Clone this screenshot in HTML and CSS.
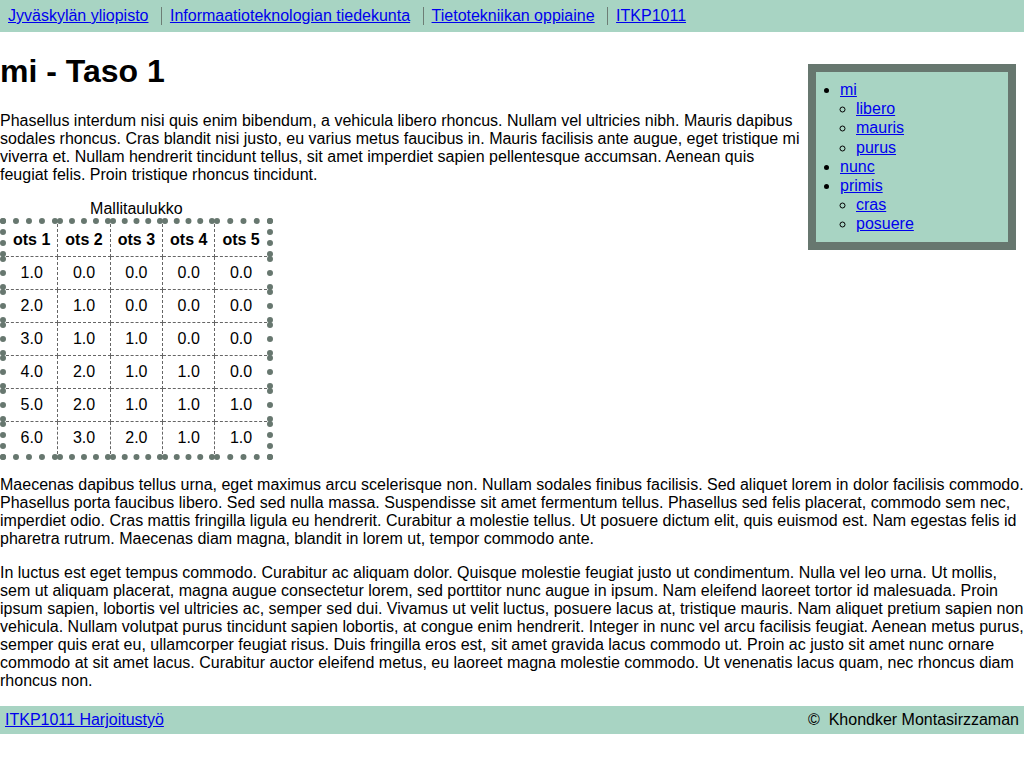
FILE: index.html
```html
<!DOCTYPE html>
<html lang="fi">
<head>
<meta charset="utf-8">
<title>mi - Taso 1</title>
<link rel="stylesheet" href="styles.css">
</head>
<body>
<header class="topbar">
  <ul class="crumbs">
    <li><a href="#">Jyväskylän yliopisto</a></li>
    <li><a href="#">Informaatioteknologian tiedekunta</a></li>
    <li><a href="#">Tietotekniikan oppiaine</a></li>
    <li><a href="#">ITKP1011</a></li>
  </ul>
</header>
<main class="content">
  <aside class="sidenav">
    <ul class="menu">
      <li><a href="#">mi</a>
        <ul class="submenu">
          <li><a href="#">libero</a></li>
          <li><a href="#">mauris</a></li>
          <li><a href="#">purus</a></li>
        </ul>
      </li>
      <li><a href="#">nunc</a></li>
      <li><a href="#">primis</a>
        <ul class="submenu">
          <li><a href="#">cras</a></li>
          <li><a href="#">posuere</a></li>
        </ul>
      </li>
    </ul>
  </aside>
  <h1 class="title">mi - Taso 1</h1>
  <p>Phasellus interdum nisi quis enim bibendum, a vehicula libero rhoncus. Nullam vel ultricies nibh. Mauris dapibus sodales rhoncus. Cras blandit nisi justo, eu varius metus faucibus in. Mauris facilisis ante augue, eget tristique mi viverra et. Nullam hendrerit tincidunt tellus, sit amet imperdiet sapien pellentesque accumsan. Aenean quis feugiat felis. Proin tristique rhoncus tincidunt.</p>
  <table class="sample">
    <caption>Mallitaulukko</caption>
    <thead>
      <tr><th>ots 1</th><th>ots 2</th><th>ots 3</th><th>ots 4</th><th>ots 5</th></tr>
    </thead>
    <tbody>
      <tr><td>1.0</td><td>0.0</td><td>0.0</td><td>0.0</td><td>0.0</td></tr>
      <tr><td>2.0</td><td>1.0</td><td>0.0</td><td>0.0</td><td>0.0</td></tr>
      <tr><td>3.0</td><td>1.0</td><td>1.0</td><td>0.0</td><td>0.0</td></tr>
      <tr><td>4.0</td><td>2.0</td><td>1.0</td><td>1.0</td><td>0.0</td></tr>
      <tr><td>5.0</td><td>2.0</td><td>1.0</td><td>1.0</td><td>1.0</td></tr>
      <tr><td>6.0</td><td>3.0</td><td>2.0</td><td>1.0</td><td>1.0</td></tr>
    </tbody>
  </table>
  <p>Maecenas dapibus tellus urna, eget maximus arcu scelerisque non. Nullam sodales finibus facilisis. Sed aliquet lorem in dolor facilisis commodo. Phasellus porta faucibus libero. Sed sed nulla massa. Suspendisse sit amet fermentum tellus. Phasellus sed felis placerat, commodo sem nec, imperdiet odio. Cras mattis fringilla ligula eu hendrerit. Curabitur a molestie tellus. Ut posuere dictum elit, quis euismod est. Nam egestas felis id pharetra rutrum. Maecenas diam magna, blandit in lorem ut, tempor commodo ante.</p>
  <p>In luctus est eget tempus commodo. Curabitur ac aliquam dolor. Quisque molestie feugiat justo ut condimentum. Nulla vel leo urna. Ut mollis, sem ut aliquam placerat, magna augue consectetur lorem, sed porttitor nunc augue in ipsum. Nam eleifend laoreet tortor id malesuada. Proin ipsum sapien, lobortis vel ultricies ac, semper sed dui. Vivamus ut velit luctus, posuere lacus at, tristique mauris. Nam aliquet pretium sapien non vehicula. Nullam volutpat purus tincidunt sapien lobortis, at congue enim hendrerit. Integer in nunc vel arcu facilisis feugiat. Aenean metus purus, semper quis erat eu, ullamcorper feugiat risus. Duis fringilla eros est, sit amet gravida lacus commodo ut. Proin ac justo sit amet nunc ornare commodo at sit amet lacus. Curabitur auctor eleifend metus, eu laoreet magna molestie commodo. Ut venenatis lacus quam, nec rhoncus diam rhoncus non.</p>
</main>
<footer class="footer">
  <a href="#">ITKP1011 Harjoitustyö</a>
  <span class="author">©&nbsp; Khondker Montasirzzaman</span>
</footer>
</body>
</html>
```
FILE: styles.css
```css
html, body {
  margin: 0;
  padding: 0;
}
body {
  font-family: "Liberation Sans", Arial, sans-serif;
  font-size: 16px;
  color: #000;
  background: #fff;
}
a {
  color: #0000ee;
}
.topbar {
  background: #a8d4c3;
  padding: 7px 0;
}
.crumbs {
  list-style: none;
  margin: 0;
  padding: 0;
  display: flex;
  line-height: 18px;
}
.crumbs li {
  padding: 0 8px;
  margin-right: 4.45px;
}
.crumbs li + li {
  border-left: 1px solid #6d7d75;
}
.content {
  display: flow-root;
}
.sidenav {
  float: right;
  margin: 32px 8px 8px 8px;
  width: 176px;
  padding: 8px;
  background: #a8d4c3;
  border: 8px solid #67776f;
}
.menu {
  margin: 0;
  padding-left: 16px;
  list-style: disc;
  line-height: 19.2px;
}
.submenu {
  margin: 0;
  padding-left: 16px;
  list-style: circle;
}
.title {
  font-size: 32px;
  margin: 21.44px 0;
}
.content p {
  margin: 16px 0;
  line-height: 18px;
}
.sample {
  border-collapse: collapse;
  border: 6px dotted #67776f;
}
.sample caption {
  line-height: 18px;
}
.sample th,
.sample td {
  border: 1px dashed #666;
  padding: 7px;
  text-align: center;
  line-height: 18px;
}
.footer {
  display: flex;
  justify-content: space-between;
  background: #a8d4c3;
  padding: 5px;
  line-height: 18px;
}
```
